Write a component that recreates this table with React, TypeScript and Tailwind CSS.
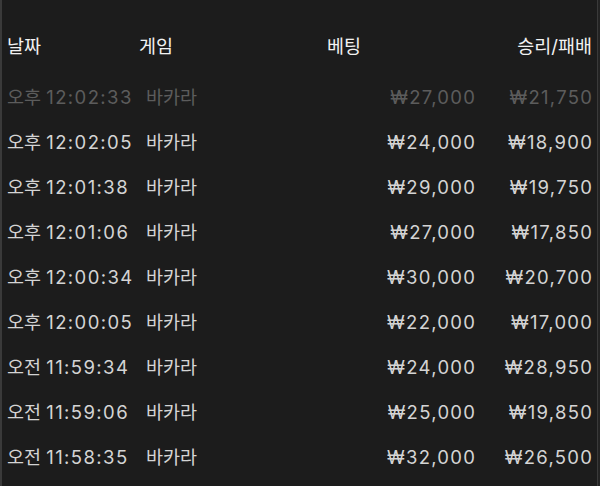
const rows = [
  { ampm: '오후', time: '12:02:33', bet: '₩27,000', result: '₩21,750', dim: true },
  { ampm: '오후', time: '12:02:05', bet: '₩24,000', result: '₩18,900' },
  { ampm: '오후', time: '12:01:38', bet: '₩29,000', result: '₩19,750' },
  { ampm: '오후', time: '12:01:06', bet: '₩27,000', result: '₩17,850' },
  { ampm: '오후', time: '12:00:34', bet: '₩30,000', result: '₩20,700' },
  { ampm: '오후', time: '12:00:05', bet: '₩22,000', result: '₩17,000' },
  { ampm: '오전', time: '11:59:34', bet: '₩24,000', result: '₩28,950' },
  { ampm: '오전', time: '11:59:06', bet: '₩25,000', result: '₩19,850' },
  { ampm: '오전', time: '11:58:35', bet: '₩32,000', result: '₩26,500' },
];

const App = () => {
  return (
    <div
      className="w-[600px] h-[486px] overflow-hidden bg-[#1c1c1c] flex"
      style={{ fontFamily: 'Inter, "Noto Sans CJK KR", sans-serif' }}
    >
      <div className="w-[2px] bg-[#3a3a3a]" />
      <section className="flex-1 flex flex-col">
        {/* header */}
        <div className="grid grid-cols-[132px_188px_148px_1fr] h-[45px] mt-[24px] items-center pl-[5px] pr-[5px] text-[18.5px] text-[#f2f2f2]">
          <div>날짜</div>
          <div>게임</div>
          <div>베팅</div>
          <div className="text-right">승리/패배</div>
        </div>

        {/* rows */}
        <div className="mt-[6px] flex flex-col">
          {rows.map((r, i) => (
            <div
              key={i}
              className={`grid grid-cols-[132px_188px_148px_1fr] h-[45px] items-center pl-[5px] pr-[5px] text-[18.5px] ${
                r.dim ? 'text-[#5c5c5c]' : 'text-[#d4d4d4]'
              }`}
            >
              <div className="whitespace-nowrap">
                {r.ampm} <span className="tracking-[1.4px]">{r.time}</span>
              </div>
              <div className="pl-[7px]">바카라</div>
              <div className="text-right">
                <span className="tracking-[1.3px] mr-[-1.3px]">{r.bet}</span>
              </div>
              <div className="text-right">
                <span className="tracking-[1.3px] mr-[-1.3px]">{r.result}</span>
              </div>
            </div>
          ))}
        </div>
      </section>
      <div className="w-[1px] bg-[#3a3a3a]" />
      <div className="w-[2px] bg-[#232323]" />
    </div>
  );
};

export default App;
